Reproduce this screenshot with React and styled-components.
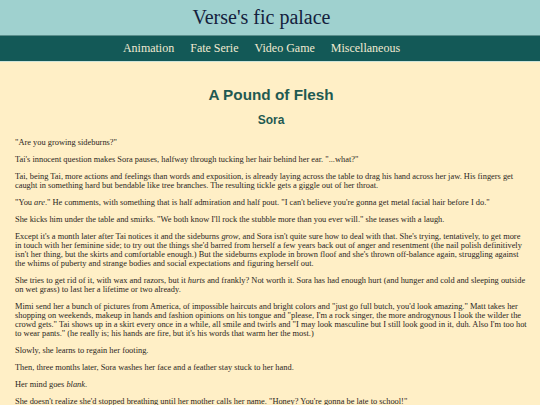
import React from 'react'
import styled, { createGlobalStyle } from 'styled-components'

const GlobalStyle = createGlobalStyle`
  html, body {
    margin: 0;
    padding: 0;
    background: #ffefc6;
  }
`

const Page = styled.div`
  min-height: 405px;
  background: #ffefc6;
  font-family: "Liberation Serif", serif;
`

const Header = styled.header`
  background: #9fd1cf;
  height: 35px;
  display: flex;
  align-items: center;
  justify-content: center;
  padding-right: 17px;
  border-bottom: 1px solid #5b8f8d;
`

const SiteTitle = styled.h1`
  margin: 0;
  font-family: "Liberation Serif", serif;
  font-weight: 400;
  font-size: 20px;
  color: #14213d;
`

const Nav = styled.nav`
  background: #135957;
  height: 25px;
  display: flex;
  align-items: center;
  justify-content: center;
  gap: 16px;
  padding-right: 17px;
  border-bottom: 1px solid #cfe3d8;
`

const NavLink = styled.a`
  color: #f1ead2;
  font-size: 12px;
  text-decoration: none;
`

const Main = styled.main`
  padding: 0 13px 0 15px;
`

const Title = styled.h2`
  margin: 24px 0 0;
  text-align: center;
  font-family: "Liberation Sans", Arial, sans-serif;
  font-weight: 700;
  font-size: 15.3px;
  color: #1f5a52;
`

const Author = styled.h3`
  margin: 9px 0 11px;
  text-align: center;
  font-family: "Liberation Sans", Arial, sans-serif;
  font-weight: 700;
  font-size: 12px;
  color: #1f5a52;
`

const Para = styled.p`
  margin: 0 0 8px;
  font-size: 8.4px;
  line-height: 9px;
  color: #2a2622;
`

const links = ['Animation', 'Fate Serie', 'Video Game', 'Miscellaneous']

export default function App() {
  return (
    <Page>
      <GlobalStyle />
      <Header>
        <SiteTitle>Verse's fic palace</SiteTitle>
      </Header>
      <Nav>
        {links.map((l) => (
          <NavLink key={l} href="#">{l}</NavLink>
        ))}
      </Nav>
      <Main>
        <Title>A Pound of Flesh</Title>
        <Author>Sora</Author>
        <Para>"Are you growing sideburns?"</Para>
        <Para>Tai's innocent question makes Sora pauses, halfway through tucking her hair behind her ear. "...what?"</Para>
        <Para>Tai, being Tai, more actions and feelings than words and exposition, is already laying across the table to drag his hand across her jaw. His fingers get caught in something hard but bendable like tree branches. The resulting tickle gets a giggle out of her throat.</Para>
        <Para>"You <em>are</em>." He comments, with something that is half admiration and half pout. "I can't believe you're gonna get metal facial hair before I do."</Para>
        <Para>She kicks him under the table and smirks. "We both know I'll rock the stubble more than you ever will." she teases with a laugh.</Para>
        <Para>Except it's a month later after Tai notices it and the sideburns <em>grow</em>, and Sora isn't quite sure how to deal with that. She's trying, tentatively, to get more in touch with her feminine side; to try out the things she'd barred from herself a few years back out of anger and resentment (the nail polish definitively isn't her thing, but the skirts and comfortable enough.) But the sideburns explode in brown floof and she's thrown off-balance again, struggling against the whims of puberty and strange bodies and social expectations and figuring herself out.</Para>
        <Para>She tries to get rid of it, with wax and razors, but it <em>hurts</em> and frankly? Not worth it. Sora has had enough hurt (and hunger and cold and sleeping outside on wet grass) to last her a lifetime or two already.</Para>
        <Para>Mimi send her a bunch of pictures from America, of impossible haircuts and bright colors and "just go full butch, you'd look amazing." Matt takes her shopping on weekends, makeup in hands and fashion opinions on his tongue and "please, I'm a rock singer, the more androgynous I look the wilder the crowd gets." Tai shows up in a skirt every once in a while, all smile and twirls and "I may look masculine but I still look good in it, duh. Also I'm too hot to wear pants." (he really is; his hands are fire, but it's his words that warm her the most.)</Para>
        <Para>Slowly, she learns to regain her footing.</Para>
        <Para>Then, three months later, Sora washes her face and a feather stay stuck to her hand.</Para>
        <Para>Her mind goes <em>blank</em>.</Para>
        <Para>She doesn't realize she'd stopped breathing until her mother calls her name. "Honey? You're gonna be late to school!"</Para>
      </Main>
    </Page>
  )
}
